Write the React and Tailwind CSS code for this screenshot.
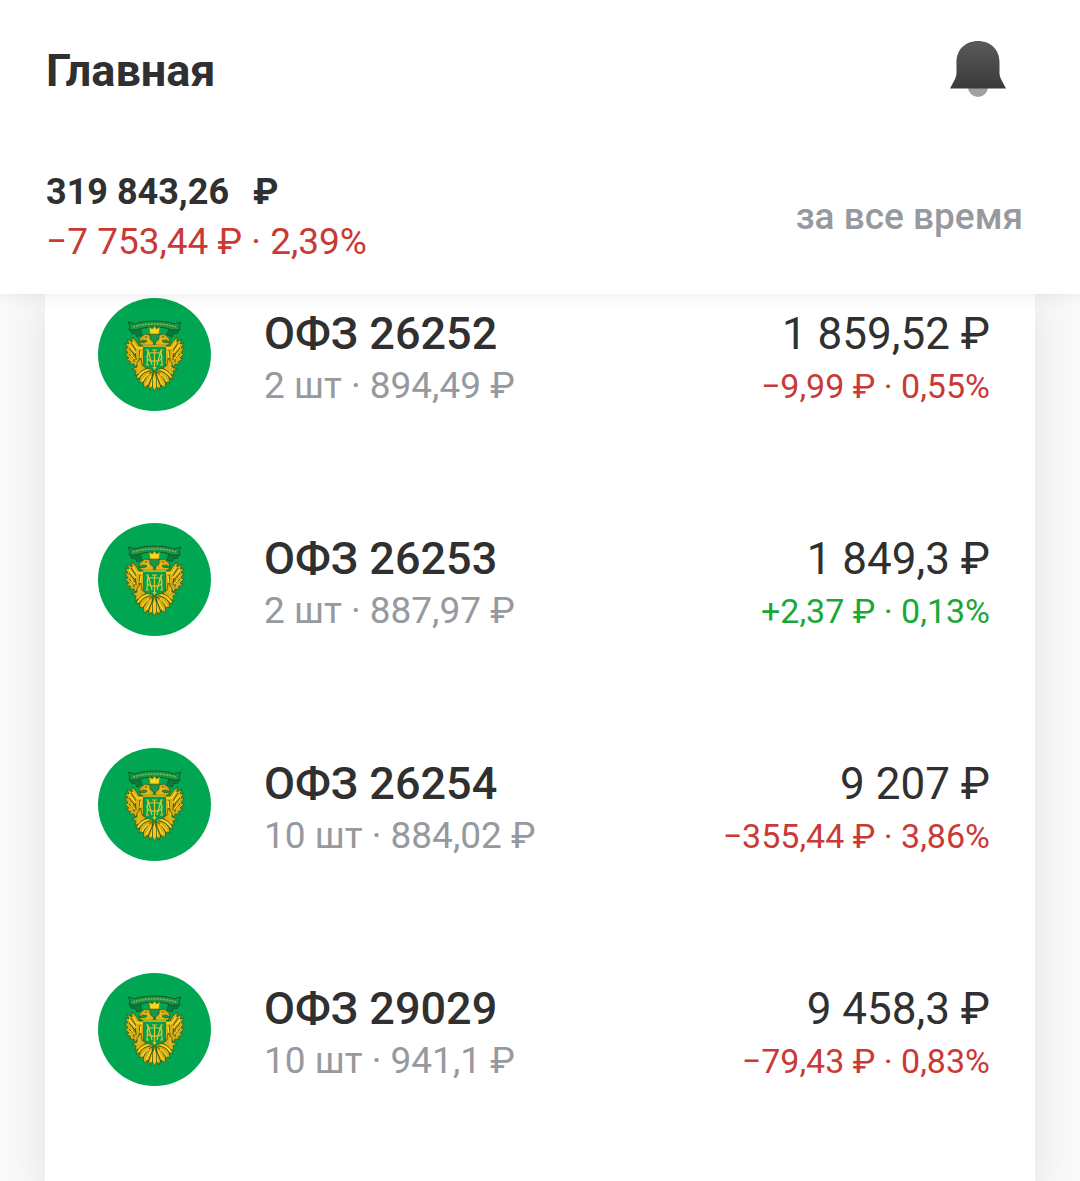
import React from 'react';

const bonds = [
  { name: 'ОФЗ 26252', info: '2 шт · 894,49 ₽', total: '1 859,52 ₽', change: '−9,99 ₽ · 0,55%', up: false },
  { name: 'ОФЗ 26253', info: '2 шт · 887,97 ₽', total: '1 849,3 ₽', change: '+2,37 ₽ · 0,13%', up: true },
  { name: 'ОФЗ 26254', info: '10 шт · 884,02 ₽', total: '9 207 ₽', change: '−355,44 ₽ · 3,86%', up: false },
  { name: 'ОФЗ 29029', info: '10 шт · 941,1 ₽', total: '9 458,3 ₽', change: '−79,43 ₽ · 0,83%', up: false },
];

const BellIcon = () => (
  <svg viewBox="0 0 56 56" className="size-14" aria-hidden="true">
    <defs>
      <linearGradient id="bell" x1="0" y1="0" x2="0" y2="1">
        <stop offset="0" stopColor="#5a5a5a" />
        <stop offset="1" stopColor="#3a3a3a" />
      </linearGradient>
    </defs>
    <circle cx="28" cy="46" r="10" fill="#a0a0a0" />
    <path d="M28 0C15 0 6.500 9 6.500 21v11c0 3-1 5-2.500 8L0 47.500h56L52 40c-1.500-3-2.500-5-2.500-8V21C49.500 9 41 0 28 0Z" fill="url(#bell)" />
  </svg>
);

// left half of the eagle, mirrored for the right side
const EagleHalf = () => (
  <g stroke="#3c5212" strokeWidth="0.7" strokeLinejoin="round">
    {/* wing */}
    <path
      fill="#d9ad16"
      d="M47 48h-6l-3-5-4-4v5l-5-3 2 5-4-1 3 5-3 0 3 5-3 1 4 4-3 1 5 3-2 2 5 0 1 3 4-4 3 3 3-4z"
    />
    <path fill="none" strokeWidth="1" d="M33 45l4 6 1 11M31 50l5 6v8M31 56l4 4M42 52l-1 12" />
    <path fill="none" stroke="#fbd726" strokeWidth="1.300" d="M35 44l4 6h7M34 50l4 5M33 57l4 4M43 53l-1 7M31 46l3 5" />
    {/* neck and head */}
    <path fill="#d9ad16" d="M56 47H43l-2-3 5 1 3-2-4-1-4 2 1-4 5-4 5 1 3 4z" />
    <path fill="none" stroke="#f5cf25" d="M47 39l4 2-1 4M44 46h10" />
    <circle cx="48" cy="39" r="0.800" fill="#24551f" stroke="none" />
    {/* leg and claw */}
    <path fill="#d9ad16" d="M43 60l-4 5v4l-5 2 4 2-1 5 3-2 3 3 1-5 4-4-4-3z" />
    <path fill="none" stroke="#fbd726" d="M41 65v6M39 75l3-2" />
    {/* tail feathers, spread like a fan */}
    <path fill="#d9ad16" d="M54 70c-8 0-14 4-16 11l4-1-1 5 4-2 1 7 4-3 2 5 3-7z" />
    <path fill="none" strokeWidth="1" d="M53 73c-6 0-10 4-12 8M54 74c-5 3-7 7-9 11M55 76l-5 13" />
    <path fill="none" stroke="#fbd726" strokeWidth="1.300" d="M50 72c-5 1-8 4-10 7M51 76c-3 2-6 5-7 8M53 78l-5 9M55 80l-2 9" />
  </g>
);

const BondLogo = () => (
  <svg viewBox="0 0 113 113" className="size-[113px] shrink-0" role="img" aria-label="ОФЗ">
    <circle cx="56.500" cy="56.500" r="56.500" fill="#00a651" />
    {/* ribbon */}
    <path
      d="M33 30c-2 4 1 7 4 5l2 4 5-2-2-7zM80 30c2 4-1 7-4 5l-2 4-5-2 2-7z"
      fill="#087a3a"
      stroke="#17562b"
      strokeWidth="0.800"
    />
    <path
      d="M30 24l7 2c8-4 31-4 39 0l7-2-2 4 1 4-8 0c-8-4-27-4-35 0l-8 0 1-4z"
      fill="#129849"
      stroke="#17562b"
      strokeWidth="1"
    />
    <path d="M35 29c12-4 31-4 43 0" fill="none" stroke="#94b23c" strokeWidth="1.500" strokeDasharray="2 1" />
    <EagleHalf />
    <g transform="translate(113 0) scale(-1 1)">
      <EagleHalf />
    </g>
    {/* crown above a small crest */}
    <path d="M52 36h9v5l-4.500 4-4.500-4z" fill="#16984a" stroke="#3c5212" strokeWidth="0.700" />
    <path d="M52 36l-1-7 3.500 2 2-3 2 3 3.500-2-1 7z" fill="#fbd51f" stroke="#6e7d18" strokeWidth="0.700" />
    {/* tail centre */}
    <path d="M56.500 73l-2 7v9l2 4 2-4v-9z" fill="#f0c820" stroke="#3c5212" strokeWidth="0.700" />
    {/* shield */}
    <path d="M45.500 48h22v19c0 3-6 3-11 6-5-3-11-3-11-6z" fill="#049f4c" stroke="#3c7a24" strokeWidth="1" />
    <path d="M45 48h23" stroke="#e5bd20" strokeWidth="1.500" />
    <g fill="none" stroke="#dcc52e" strokeWidth="1.200">
      <path d="M48 52h2l4 15M50 52l-1 15M48 67h3M65 52h-2l-4 15M63 52l1 15M65 67h-3" />
      <path d="M56.500 52v18M54 52h5M55 69l1.500 2 1.500-2" />
      <path d="M56.500 55c-10-2-10 9 0 8 10 1 10-10 0-8z" />
    </g>
  </svg>
);

const App = () => (
  <div className="flex min-h-screen flex-col bg-[#fafafa] font-['Roboto','Liberation_Sans',sans-serif] text-[#303030]">
    <header className="relative z-10 bg-white pt-10 pr-[57px] pb-[27px] pl-[46px] shadow-[0_2px_16px_rgba(0,0,0,0.08)]">
      <div className="flex items-start justify-between pr-[17px]">
        <h1 className="text-[45px] leading-[62px] font-bold">Главная</h1>
        <button type="button" aria-label="Уведомления" className="mt-px">
          <BellIcon />
        </button>
      </div>
      <div className="mt-[65px] flex items-center justify-between">
        <div className="leading-[50px]">
          <div className="flex gap-6 text-[36px] font-bold">
            <span>319 843,26</span>
            <span>₽</span>
          </div>
          <div className="text-[37px] text-[#c93a36]">−7 753,44 ₽ · 2,39%</div>
        </div>
        <div className="text-[37px] leading-[50px] font-medium text-[#96999e]">за все время</div>
      </div>
    </header>

    <main className="flex grow flex-col px-[45px]">
      <ul className="grow bg-white pt-1 pr-[45px] pl-[53px] shadow-[0_0_45px_rgba(0,0,0,0.1)]">
        {bonds.map((bond) => (
          <li key={bond.name} className="flex h-[225px] items-start">
            <BondLogo />
            <div className="ml-[53px] grow pt-1.5">
              <div className="text-[45px] leading-[60px] font-medium">{bond.name}</div>
              <div className="text-[37px] leading-[44px] text-[#96999e]">{bond.info}</div>
            </div>
            <div className="pt-1.5 text-right">
              <div className="text-[44px] leading-[60px]">{bond.total}</div>
              <div className={`text-[34px] leading-[44px] ${bond.up ? 'text-[#18a838]' : 'text-[#c93a36]'}`}>
                {bond.change}
              </div>
            </div>
          </li>
        ))}
      </ul>
    </main>
  </div>
);

export default App;
